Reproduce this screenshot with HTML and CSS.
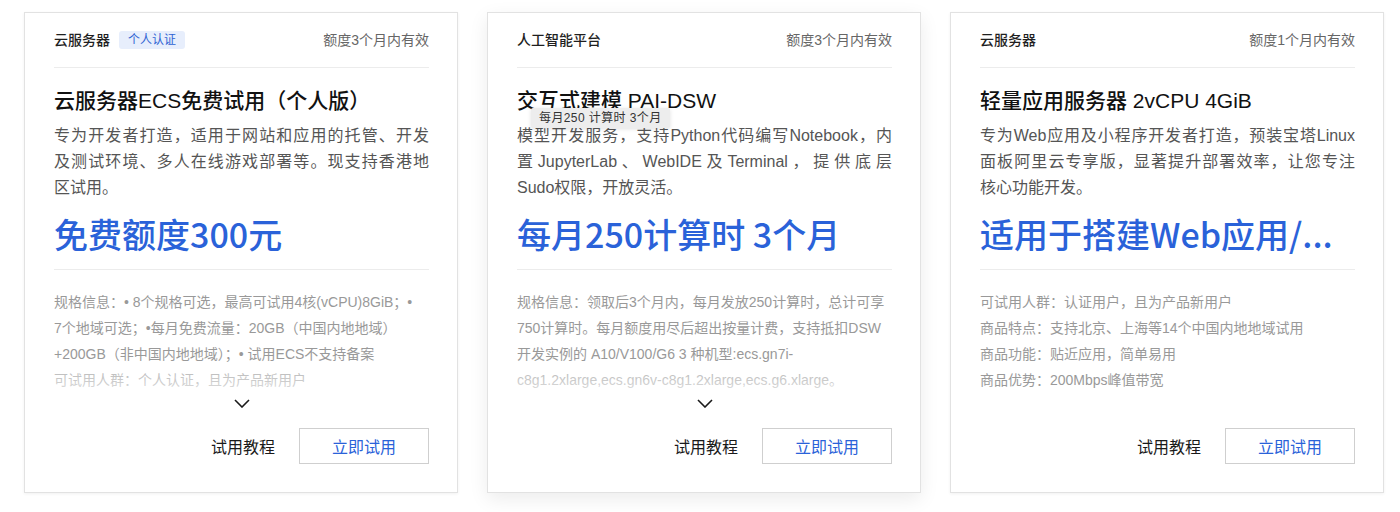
FILE: index.html
```html
<!DOCTYPE html>
<html lang="zh-CN">
<head>
<meta charset="utf-8">
<title>免费试用</title>
<link rel="stylesheet" href="styles.css">
</head>
<body>
<div class="cards">
  <div class="card">
    <div class="head">
      <div class="cat">云服务器<span class="tag">个人认证</span></div>
      <div class="valid">额度3个月内有效</div>
    </div>
    <div class="title">云服务器ECS免费试用（个人版）</div>
    <div class="desc">
      <span class="ln">专为开发者打造，适用于网站和应用的托管、开发</span>
      <span class="ln">及测试环境、多人在线游戏部署等。现支持香港地</span>
      <span class="ln last">区试用。</span>
    </div>
    <div class="price">免费额度300元</div>
    <div class="spec fade">
      <span class="sl">规格信息：• 8个规格可选，最高可试用4核(vCPU)8GiB；•</span>
      <span class="sl">7个地域可选；•每月免费流量：20GB（中国内地地域）</span>
      <span class="sl">+200GB（非中国内地地域）；• 试用ECS不支持备案</span>
      <span class="sl">可试用人群：个人认证，且为产品新用户</span>
    </div>
    <div class="toggle"><svg width="16" height="9" viewBox="0 0 16 9"><polyline points="1,1 8,8 15,1" fill="none" stroke="#1a1a1a" stroke-width="1.6"/></svg></div>
    <div class="actions">
      <span class="guide">试用教程</span>
      <span class="btn">立即试用</span>
    </div>
  </div>

  <div class="card hover">
    <div class="head">
      <div class="cat">人工智能平台</div>
      <div class="valid">额度3个月内有效</div>
    </div>
    <div class="title">交互式建模 PAI-DSW</div>
    <div class="desc">
      <span class="ln">模型开发服务，支持Python代码编写Notebook，内</span>
      <span class="ln">置 JupyterLab 、 WebIDE 及 Terminal ， 提 供 底 层</span>
      <span class="ln last">Sudo权限，开放灵活。</span>
    </div>
    <div class="price">每月250计算时 3个月</div>
    <div class="spec fade">
      <span class="sl">规格信息：领取后3个月内，每月发放250计算时，总计可享</span>
      <span class="sl">750计算时。每月额度用尽后超出按量计费，支持抵扣DSW</span>
      <span class="sl">开发实例的 A10/V100/G6 3 种机型:ecs.gn7i-</span>
      <span class="sl">c8g1.2xlarge,ecs.gn6v-c8g1.2xlarge,ecs.g6.xlarge。</span>
    </div>
    <div class="toggle"><svg width="16" height="9" viewBox="0 0 16 9"><polyline points="1,1 8,8 15,1" fill="none" stroke="#1a1a1a" stroke-width="1.6"/></svg></div>
    <div class="actions">
      <span class="guide">试用教程</span>
      <span class="btn">立即试用</span>
    </div>
    <div class="tip">每月250 计算时 3个月</div>
  </div>

  <div class="card">
    <div class="head">
      <div class="cat">云服务器</div>
      <div class="valid">额度1个月内有效</div>
    </div>
    <div class="title">轻量应用服务器 2vCPU 4GiB</div>
    <div class="desc">
      <span class="ln">专为Web应用及小程序开发者打造，预装宝塔Linux</span>
      <span class="ln">面板阿里云专享版，显著提升部署效率，让您专注</span>
      <span class="ln last">核心功能开发。</span>
    </div>
    <div class="price">适用于搭建Web应用/...</div>
    <div class="spec">
      <span class="sl">可试用人群：认证用户，且为产品新用户</span>
      <span class="sl">商品特点：支持北京、上海等14个中国内地地域试用</span>
      <span class="sl">商品功能：贴近应用，简单易用</span>
      <span class="sl">商品优势：200Mbps峰值带宽</span>
    </div>
    <div class="toggle"></div>
    <div class="actions">
      <span class="guide">试用教程</span>
      <span class="btn">立即试用</span>
    </div>
  </div>
</div>
</body>
</html>
```

FILE: styles.css
```css
* { box-sizing: border-box; }
html, body { margin: 0; padding: 0; background: #fff; }
body {
  font-family: "Liberation Sans", "Noto Sans CJK SC", sans-serif;
  color: #1a1a1a;
  width: 1400px;
  height: 512px;
  overflow: hidden;
}
.cards {
  display: flex;
  gap: 29px;
  padding: 12px 0 0 24px;
}
.card {
  position: relative;
  width: 434px;
  height: 481px;
  border: 1px solid #e2e2e2;
  background: #fff;
  box-shadow: 0 1px 3px rgba(0,0,0,0.06);
  padding: 17px 28px 0 29px;
  display: flex;
  flex-direction: column;
}
.card.hover {
  box-shadow: 0 6px 18px rgba(0,0,0,0.08);
}
.head {
  height: 20px;
  display: flex;
  align-items: center;
  justify-content: space-between;
  box-sizing: content-box;
  padding-bottom: 17px;
  border-bottom: 1px solid #ececec;
}
.cat {
  font-size: 14px;
  font-weight: 500;
  color: #1f1f1f;
  display: flex;
  align-items: center;
  line-height: 20px;
}
.tag {
  margin-left: 9px;
  height: 18px;
  line-height: 18px;
  padding: 0 9px;
  font-size: 12px;
  font-weight: 400;
  color: #2f63d3;
  background: #e7eefc;
  border-radius: 3px;
}
.valid {
  font-size: 14px;
  color: #666;
  line-height: 20px;
}
.title {
  margin-top: 18px;
  font-size: 21px;
  line-height: 30px;
  font-weight: 500;
  color: #111;
  white-space: nowrap;
}
.desc {
  margin-top: 7px;
  font-size: 16px;
  line-height: 26px;
  color: #555;
}
.ln {
  display: block;
  white-space: nowrap;
  text-align: justify;
  text-align-last: justify;
}
.ln.last { text-align-last: left; }
.price {
  margin-top: 10px;
  font-family: "Noto Sans CJK SC", "Liberation Sans", sans-serif;
  font-size: 34px;
  line-height: 46px;
  font-weight: 500;
  color: #2a62d9;
  white-space: nowrap;
  box-sizing: content-box;
  padding-bottom: 12px;
  border-bottom: 1px solid #ececec;
}
.spec {
  position: relative;
  margin-top: 19px;
  height: 104px;
  overflow: hidden;
  font-size: 14px;
  line-height: 26px;
  color: #999;
}
.sl {
  display: block;
  white-space: nowrap;
}
.spec.fade::after {
  content: "";
  position: absolute;
  left: 0;
  right: 0;
  bottom: 0;
  height: 30px;
  background: linear-gradient(to bottom, rgba(255,255,255,0.2), rgba(255,255,255,0.7));
}
.toggle {
  height: 20px;
  display: flex;
  justify-content: center;
  align-items: center;
}
.toggle svg { display: block; }
.actions {
  margin-top: 15px;
  display: flex;
  justify-content: flex-end;
  align-items: center;
  gap: 24px;
}
.guide {
  font-size: 16px;
  color: #1a1a1a;
}
.btn {
  width: 130px;
  height: 36px;
  border: 1px solid #cfcfcf;
  display: flex;
  align-items: center;
  justify-content: center;
  font-size: 16px;
  color: #2a62d9;
}
.tip {
  position: absolute;
  left: 43px;
  top: 95px;
  height: 20px;
  padding: 0 8px;
  line-height: 20px;
  font-size: 12px;
  letter-spacing: 0.4px;
  color: #333;
  background: #ededed;
  border-radius: 2px;
  box-shadow: 0 1px 4px rgba(0,0,0,0.12);
  white-space: nowrap;
}
```
